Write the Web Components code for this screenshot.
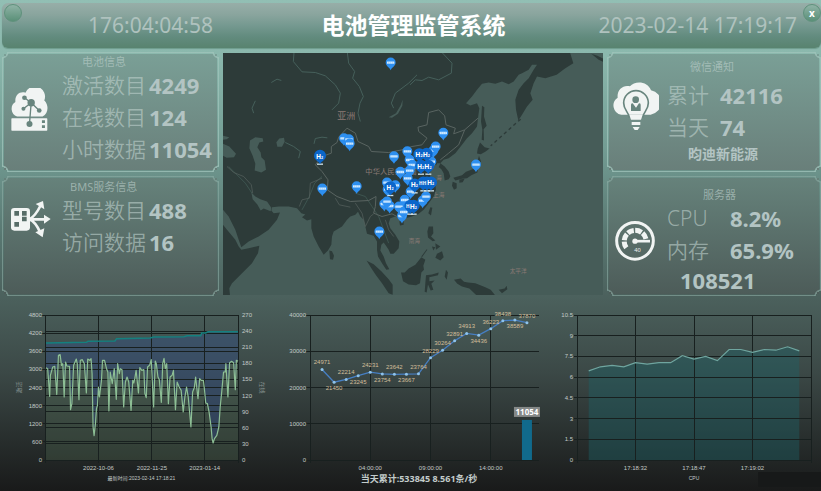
<!DOCTYPE html>
<html lang="zh-CN">
<head>
<meta charset="utf-8">
<title>电池管理监管系统</title>
<style>
html { height: 100%; }
body {
  margin: 0; min-height: 100%;
  font-family: "Noto Sans", "Noto Sans CJK SC", sans-serif;
  background: #1b1d1d;
}
</style>
</head>
<body>
<battery-dashboard></battery-dashboard>
<script>
const define = (name, html, setup) => {
  const tpl = document.createElement('template');
  tpl.innerHTML = html;
  customElements.define(name, class extends HTMLElement {
    constructor() {
      super();
      this.attachShadow({ mode: 'open' }).append(tpl.content.cloneNode(true));
    }
    connectedCallback() { if (setup) setup(this, this.shadowRoot); }
  });
};

/* ---------- header ---------- */
define('top-bar', `
<style>
:host { display: grid; grid-template-columns: 1fr auto 1fr; align-items: center; position: relative;
  min-height: 45px; border-radius: 6px; overflow: hidden; margin-left: 2px; padding-left: 4px; box-sizing: border-box;
  background: linear-gradient(#97aea8 0, #8aa59e 25%, #759990 50%, #628b7e 75%, #58836f 100%);
  box-shadow: 0 1px 1px #6d9c8c; }
h1 { margin: 0; font-size: 23px; line-height: 45px; font-weight: 700; color: #fff; }
time { font-size: 21px; line-height: 45px; color: #afc2be; font-weight: 400; }
.up { justify-self: start; padding-left: 82px; }
.now { justify-self: end; padding-right: 24px; }
button { position: absolute; top: 1px; width: 18px; height: 18px; border-radius: 50%; padding: 0;
  border: 1px solid #5f917c; background: linear-gradient(#8fb3a6, #5a9078); color: #fff;
  font: 700 10px/14px "Noto Sans", sans-serif; }
.menu { left: 2px; } .close { right: 0; }
</style>
<time class="up">176:04:04:58</time>
<h1>电池管理监管系统</h1>
<time class="now">2023-02-14 17:19:17</time>
<button class="menu" aria-label="菜单"></button>
<button class="close" aria-label="关闭">x</button>`);

/* ---------- panel ---------- */
define('info-panel', `
<style>
:host { --ln: rgba(160,196,187,.75); display: flex; box-sizing: border-box; min-width: 0;
  background:
   radial-gradient(circle at 0 0, transparent 5px, var(--ln) 5px 6px, transparent 7px) 0 0/7px 7px no-repeat,
   radial-gradient(circle at 100% 0, transparent 5px, var(--ln) 5px 6px, transparent 7px) 100% 0/7px 7px no-repeat,
   radial-gradient(circle at 0 100%, transparent 5px, var(--ln) 5px 6px, transparent 7px) 0 100%/7px 7px no-repeat,
   radial-gradient(circle at 100% 100%, transparent 5px, var(--ln) 5px 6px, transparent 7px) 100% 100%/7px 7px no-repeat,
   linear-gradient(var(--ln), var(--ln)) 50% 0/calc(100% - 12px) 1px no-repeat,
   linear-gradient(var(--ln), var(--ln)) 50% 100%/calc(100% - 12px) 1px no-repeat,
   linear-gradient(var(--ln), var(--ln)) 0 50%/1px calc(100% - 12px) no-repeat,
   linear-gradient(var(--ln), var(--ln)) 100% 50%/1px calc(100% - 12px) no-repeat,
   linear-gradient(var(--from), var(--to)) 50% 50%/calc(100% - 4px) calc(100% - 4px) no-repeat; }
:host([tone="low"]) { --ln: rgba(140,172,164,.6); }
.icon { flex: none; width: 60px; box-sizing: border-box; padding: var(--icon-top) 0 0 var(--icon-left, 9px); }
.body { flex: 1; min-width: 0; padding-top: var(--top); white-space: nowrap; }
h2 { margin: 0 0 var(--title-gap, 0) var(--title-left); font-size: 11px; line-height: 14px; font-weight: 400;
  color: rgba(190,208,204,.62); }
</style>
<div class="icon"><slot name="icon"></slot></div>
<div class="body"><h2></h2><slot></slot></div>`,
(el, root) => { root.querySelector('h2').textContent = el.getAttribute('heading'); });

define('stat-row', `
<style>
:host { display: flex; align-items: center; line-height: 32px; }
.label { flex: none; width: var(--label-width, 87px); font-size: 21px; font-weight: 350; color: rgba(190,208,204,.62); }
.value { font-size: 22px; font-weight: 700; color: #b3c4c3; }
</style>
<span class="label"><slot name="label"></slot></span><span class="value"><slot></slot></span>`);

/* ---------- map ---------- */
define('asia-map', `
<style>
:host { display: block; position: relative; min-width: 0; overflow: hidden; background: #465c58; margin: 1px 0; }
svg { position: absolute; inset: 0; width: 100%; height: 100%; display: block; }
text { font-family: "Noto Sans", "Noto Sans CJK SC", sans-serif; }
.place { fill: #8b7a75; }
.land { fill: #2d3b39; }
.sea { fill: #465c58; }
.river { fill: none; stroke: #46605b; stroke-width: 3; }
.border { fill: none; stroke: #596461; stroke-width: 3; stroke-linejoin: round; }
</style>
<svg viewBox="3 8 1140 729" preserveAspectRatio="xMidYMid slice" role="img" aria-label="亚洲地图">
<g class="land">
<path d="M3 8H1044L1054 40 1030 55 1004 75 970 85 945 80 935 100 925 130 932 150 915 170 900 195 889 212 882 180 880 150 890 120 905 100 920 85 935 60 945 45 930 45 920 60 900 70 890 75 875 95 860 103 840 95 820 102 800 98 780 102 765 120 750 140 732 160 745 167 765 160 772 175 768 205 765 230 750 250 735 265 720 285 700 310 680 325 665 330 655 340 668 350 680 365 685 380 680 388 668 392 665 370 658 358 648 350 640 345 620 335 610 345 600 345 610 355 625 352 630 360 622 370 628 390 640 405 642 420 635 440 620 460 605 480 590 492 570 500 550 505 545 512 535 508 520 500 505 505 500 520 505 535 520 555 532 575 530 595 515 612 505 612 500 600 492 588 485 578 478 585 475 602 485 620 492 640 502 658 493 660 480 640 468 620 465 600 465 575 455 558 445 555 435 552 430 530 425 510 415 500 408 486 400 495 385 500 375 510 360 530 335 545 330 560 328 585 318 602 305 615 290 590 275 560 268 535 268 508 255 512 240 502 250 494 238 490 225 475 200 470 170 470 150 472 148 482 155 490 174 488 165 510 140 540 110 560 80 575 58 592 50 570 40 540 20 500 3 480Z"/>
<path d="M3 525 15 540 40 570 50 590 58 600 80 595 112 588 108 610 90 640 60 670 30 700 22 715 24 737H3Z"/>
<path d="M322 602 330 604 336 618 333 630 324 628Z"/>
<path d="M774 278 788 292 803 296 790 306 776 313 765 311 767 297Z"/>
<path d="M771 318 777 335 770 350 766 368 748 376 735 385 720 387 700 392 694 384 720 376 732 366 752 358 763 344Z"/>
<path d="M692 396 704 400 704 415 696 420 690 408ZM712 389 728 387 722 397 712 399Z"/>
<path d="M780 168 787 172 786 200 794 228 785 238 786 272 779 270 781 240 777 215Z"/>
<path d="M625 472 631 474 627 497 619 490ZM532 514 545 512 545 525 534 527Z"/>
<path d="M620 530 633 530 634 550 627 560 640 572 632 574 618 563 616 545ZM640 580 655 590 642 600ZM630 590 640 592 634 602ZM645 612 660 604 665 622 655 632 640 624ZM616 600 600 622 598 620 614 598Z"/>
<path d="M537 668 548 668 560 656 580 645 598 622 610 630 604 648 606 660 598 668 594 700 582 706 560 704 543 694Z"/>
<path d="M434 633 455 643 478 664 500 688 512 705 512 735 500 730 480 700 462 676 450 658Z"/>
<path d="M612 676 630 674 650 668 648 676 622 682 622 694 638 692 628 702 634 720 626 722 618 704 614 728 608 726 610 700ZM672 660 678 668 674 690 668 680ZM696 690 716 686 726 696 738 698 760 700 790 712 806 720 820 737H764L742 716 720 710 706 702ZM830 720 848 716 854 708 856 718 840 730Z"/>
<path d="M1108 12 1126 18 1143 26V36L1130 30Z"/>
</g>
<g class="sea">
<path d="M84 272 100 262 122 265 124 275 112 278 106 292 116 308 118 322 128 332 132 360 118 368 98 362 100 342 92 318 82 295Z"/>
<path d="M3 282 22 290 42 312 36 322 14 324 3 318ZM3 258 22 262 14 268 3 270Z"/>
<path d="M163 277 172 266 186 264 188 276 180 291 166 291Z"/>
<path d="M500 202 522 190 536 166 542 150 541 168 528 192 510 204Z"/>
<path d="M88 428 100 440 115 448 135 455 148 474 146 484 125 476 116 482 106 464 92 448Z"/>
<path d="M645 340 655 340 650 352 640 352Z"/>
</g>
<g class="river">
<path d="M216 8 214 35 240 66 280 68 310 78 340 105 355 130 350 160 330 180M376 8 380 40 398 65 392 85 412 110 424 140 414 160 408 190 415 215M585 75 560 100 520 130 508 160 515 175M95 190 90 175 100 153M148 98 165 88 178 92M190 278 215 290 235 305 230 325M276 282 280 266 300 262 316 264M660 8 690 40 688 70 650 90 620 82 600 92 580 90 564 105"/>
<path d="M20 350 45 375 70 400 90 430M240 480 262 440 278 400 300 380M400 430 430 440 450 470 470 500 485 540 500 580" stroke-width="2"/>
</g>
<g class="border">
<path d="M280 345 300 320 328 310 328 290 345 278 350 262 375 235 400 250 408 275 440 290 448 305 500 308 540 300 570 290 600 285 615 265 590 245 588 232 615 225 620 188 650 180 668 198 672 225 700 235 695 252 728 240 768 205M728 240 710 285 680 310 655 330M280 345 300 365 318 390 316 420 345 440 385 455 440 452 462 440 460 470 455 490 480 500 510 492 525 500"/>
<path d="M15 350 35 368 65 380 88 405 92 430M232 470 240 450 262 445 265 400 300 385M340 445 352 465 385 472M400 460 420 490 430 530 445 500 455 492M490 510 500 540 515 560" stroke-width="2"/>
</g>
<path d="M896 208 880 222 860 240 842 256 824 272 806 288" fill="none" stroke="#2d3b39" stroke-width="4" stroke-dasharray="10 9"/>
<g class="place">
<text x="346" y="207" font-size="27">亚洲</text>
<text x="430" y="374" font-size="22">中华人民共和国</text>
<text x="642" y="391" font-size="17">海</text>
<text x="633" y="441" font-size="17">上海</text>
<text x="560" y="580" font-size="17">南海</text>
<text x="863" y="669" font-size="17">太平洋</text>
</g>
<g id="pins"></g>
</svg>`,
(el, root) => {
  const small = [[506,38],[366,265],[381,268],[383,281],[301,416],[404,409],[472,545],[516,319],[556,304],[563,330],[571,345],[535,366],[563,362],[557,385],[566,425],[495,398],[520,406],[497,418],[487,462],[503,468],[495,455],[531,470],[540,498],[545,486],[664,249],[762,344],[628,335],[634,302],[641,290],[602,452],[612,440],[548,450]];
  const big = [[294,318],[505,412],[592,313],[614,312],[619,348],[597,348],[578,404],[604,398,1],[615,398,1],[627,398],[565,468,1],[575,468]];
  const mark = covered => covered
    ? '<text x="-13" y="7" font-size="14" font-weight="700" fill="#fff">H</text>'
    : '<text x="-12" y="8" font-size="20" font-weight="700" fill="#fff">H<tspan font-size="11">2</tspan></text>';
  root.getElementById('pins').innerHTML =
    small.map(([x, y]) => `<g transform="translate(${x} ${y})"><path d="M0 23C-3 15-15 11-15 0A15 15 0 0 1 15 0C15 11 3 15 0 23Z" fill="#2d8ff0"/><rect x="-11" y="-3" width="22" height="7" rx="1" fill="#d4ecff"/><path d="M-6-3v7M0-3v7M6-3v7" stroke="#5cabf5" stroke-width="1"/></g>`).join('') +
    big.map(([x, y]) => `<g transform="translate(${x} ${y})"><path d="M-9 25H9" stroke="#cfe2ec" stroke-width="4"/><path d="M0 25C-3 17-18 13-18 0A18 18 0 0 1 18 0C18 13 3 17 0 25Z" fill="#0b66ca"/></g>`).join('') +
    big.map(([x, y, covered]) => `<g transform="translate(${x} ${y})">${mark(covered)}</g>`).join('');
});

/* ---------- charts ---------- */
const chartStyle = `<style>
:host { display: block; position: relative; min-width: 0; overflow: hidden; }
svg { position: absolute; inset: 0; width: 100%; height: 100%; display: block; }
text { font: 6px "Liberation Sans", "Noto Sans CJK SC", sans-serif; fill: #c3cac8; }
.grid { stroke: #18201f; stroke-width: 1; shape-rendering: crispEdges; }
.note { font-size: 5px; }
.soft { fill: #84908d; }
.point { fill: #d3bf9b; }
.total { font: 700 9px "Noto Sans", "Noto Sans CJK SC", sans-serif; fill: #c3cccb; }
.tag { font: 700 8px "Noto Sans", sans-serif; fill: #fff; }
</style><svg></svg>`;

const frame = (el, m) => {
  const w = el.clientWidth, h = el.clientHeight;
  const x0 = m.left, x1 = w - m.right, y0 = m.top, y1 = h - m.bottom;
  return { w, h, x0, x1, y0, y1, X: f => x0 + (x1 - x0) * f, Y: f => y1 - (y1 - y0) * f };
};
const hline = (f, t, a = 4) => `<path class="grid" d="M${f.x0 - a} ${f.Y(t)}H${f.x1}"/>`;
const vline = (f, t) => `<path class="grid" d="M${f.X(t)} ${f.y0}V${f.y1 + 3}"/>`;
const label = (x, y, s, anchor = 'middle', cls = '') => `<text x="${x}" y="${y}" text-anchor="${anchor}" class="${cls}">${s}</text>`;
const chart = (name, draw) => define(name, chartStyle, (el, root) => {
  const svg = root.querySelector('svg');
  const render = () => { svg.innerHTML = draw(el); };
  render();
  new ResizeObserver(render).observe(el);
});

const online = [140,202,145,205,151,288,153,225,160,200,166,198,172,282,177,165,182,163,186,195,190,190,194,290,198,185,202,197,210,198,213,328,217,310,222,195,230,176,233,190,238,298,242,180,248,178,254,190,260,278,264,176,270,180,274,175,277,220,280,380,283,406,287,370,290,325,293,315,296,260,299,290,305,240,308,180,314,180,320,205,324,215,327,332,331,215,337,250,343,205,349,297,353,190,358,220,361,205,366,208,371,320,376,245,381,230,386,245,393,330,398,240,401,248,404,235,408,210,415,278,419,202,425,210,431,208,434,280,438,292,442,200,448,195,453,178,460,320,465,182,468,190,473,230,477,238,483,306,487,190,491,174,495,205,499,190,504,310,509,230,515,225,519,210,525,328,530,245,536,260,542,270,548,335,553,290,558,260,563,290,571,380,576,275,581,262,585,230,592,295,597,235,602,240,608,240,611,265,615,308,620,310,625,335,631,380,634,415,637,428,641,415,648,405,654,380,658,320,663,270,668,215,673,215,675,190,681,290,686,187,692,183,698,187,703,268,706,180,711,183];
const active = [140,128,260,126,265,123,345,122,350,115,450,113,460,110,550,109,560,106,600,106,603,98,615,98,622,94,711,94];

chart('active-chart', el => {
  const f = frame(el, { left: 45, right: 36, top: 19, bottom: 31 });
  const pts = a => { const r = []; for (let i = 0; i < a.length; i += 2) r.push([f.X((a[i] - 137) / 574), f.Y((479 - a[i + 1]) / 435)]); return r; };
  const g = pts(online), t = pts(active);
  let s = `<path d="M${t.join('L')}L${[...g].reverse().join('L')}Z" fill="#36507a" fill-opacity=".55"/>
    <path d="M${g[0][0]} ${f.y1}L${g.join('L')}V${f.y1}Z" fill="#7fae7c" fill-opacity=".17"/>`;
  for (let i = 0; i <= 8; i++) s += hline(f, i / 8) + label(f.x0 - 3, f.Y(i / 8) + 2, i * 600, 'end');
  for (let i = 0; i <= 9; i++) s += hline(f, i / 9, 0) + label(f.x1 + 4, f.Y(i / 9) + 2, i * 30, 'start');
  s += vline(f, 0) + vline(f, 1);
  [['2022-10-06', 159], ['2022-11-25', 318], ['2023-01-14', 475]].forEach(([d, x]) => { s += vline(f, x / 574) + label(f.X(x / 574), f.y1 + 10, d); });
  s += `<path d="M${t.join('L')}" fill="none" stroke="#14807f" stroke-width="1.5"/>
    <path d="M${g.join('L')}" fill="none" stroke="#8dbf95" stroke-width="1.2" stroke-linejoin="round"/>`;
  const my = (f.y0 + f.y1) / 2;
  s += `<text class="soft" text-anchor="middle" transform="translate(21 ${my}) rotate(-90)">激活</text>
    <text class="soft" text-anchor="middle" transform="translate(${f.w - 14} ${my}) rotate(90)">在线</text>`;
  return s + label(f.X(.5), f.y1 + 20, '最新时间:2023-02-14 17:18:21', 'middle', 'note');
});

chart('hourly-chart', el => {
  const f = frame(el, { left: 36, right: 9, top: 19, bottom: 31 });
  const v = [24971,21450,22214,23245,24231,23754,23642,23667,23764,28229,30264,32891,34913,34436,36223,38438,38589,37870];
  const below = [1, 3, 5, 7, 13, 16];
  const p = v.map((n, i) => [f.X((i + 1) / 19), f.Y(n / 40000)]);
  let s = '';
  for (let i = 0; i <= 4; i++) s += hline(f, i / 4) + label(f.x0 - 4, f.Y(i / 4) + 2, i * 10000, 'end');
  s += vline(f, 0);
  [['04:00:00', 5], ['09:00:00', 10], ['14:00:00', 15]].forEach(([d, i]) => { s += vline(f, i / 19) + label(f.X(i / 19), f.y1 + 10, d); });
  const bx = f.X(18 / 19), by = f.Y(11054 / 40000);
  s += `<rect x="${bx - 5}" y="${by}" width="10" height="${f.y1 - by}" fill="#116a8c"/>
    <rect x="${bx - 13}" y="${by - 13}" width="26" height="10" fill="#858988"/>` + label(bx, by - 5, '11054', 'middle', 'tag');
  s += `<path d="M${p.join('L')}" fill="none" stroke="#467fc4" stroke-width="1.3"/>`;
  p.forEach(([x, y], i) => {
    s += `<circle cx="${x}" cy="${y}" r="1.5" fill="#8fc3ea"/>` + label(x, below.includes(i) ? y + 8 : y - 5, v[i], 'middle', 'point');
  });
  return s + label(f.w / 2 + 8, f.y1 + 22, '当天累计:533845 8.561条/秒', 'middle', 'total');
});

chart('cpu-chart', el => {
  const f = frame(el, { left: 30, right: 10, top: 19, bottom: 31 });
  const v = [6.45,6.75,6.85,6.75,7.05,6.95,7.05,7.05,7.55,7.3,7.5,7.2,8,8,7.8,8,7.95,8.2,7.9];
  const p = v.map((n, i) => [f.X((i + 1) / 20), f.Y(n / 10.5)]);
  let s = `<path d="M${p[0][0]} ${f.y1}L${p.join('L')}V${f.y1}Z" fill="#1c6266" fill-opacity=".42"/>`;
  for (let i = 0; i <= 7; i++) s += hline(f, i / 7, 3) + label(f.x0 - 4, f.Y(i / 7) + 2, i * 1.5, 'end');
  s += vline(f, 0) + vline(f, 1);
  [['17:18:32', 5], ['17:18:47', 10], ['17:19:02', 15]].forEach(([d, i]) => { s += vline(f, i / 20) + label(f.X(i / 20), f.y1 + 10, d); });
  s += `<path d="M${p.join('L')}" fill="none" stroke="#6fa59f" stroke-width="1.2"/>
    <rect x="${f.w - 63}" y="${f.h - 19}" width="63" height="15" fill="#171919"/>`;
  return s + label(f.X(.5), f.y1 + 20, 'CPU', 'middle', 'note');
});

/* ---------- page ---------- */
define('battery-dashboard', `
<style>
:host { display: grid; min-height: 100vh; box-sizing: border-box; padding-top: 3px;
  grid-template-rows: auto minmax(244px, 248fr) minmax(180px, 195fr);
  background: linear-gradient(#92bfb4 0, #8bb8ad 11%, #739d94 30%, #587771 48%, #4b605c 61%, #3b4846 76%, #272d2c 90%, #191a1a 100%); }
.middle { display: grid; grid-template-columns: 217fr 380fr 214fr; gap: 4px; padding: 4px 0 0 2px; }
.side { display: grid; grid-template-rows: 1fr 1fr; gap: 4px; min-width: 0; }
.charts { display: grid; grid-template-columns: repeat(3, 1fr); }
.side > :first-child { --from: #7a9f96; --to: #697f7a; }
.side > :last-child { --from: #66827b; --to: #4d5c59; }
.battery { --icon-top: 36px; --top: 3px; --title-left: 20px; }
.bms { --icon-top: 24px; --top: 4px; --title-left: 8px; }
.wechat { --icon-top: 30px; --icon-left: 6px; --top: 8px; --title-left: 23px; --title-gap: 5px; --label-width: 53px; }
.server { --icon-top: 44px; --icon-left: 8px; --top: 12px; --title-left: 36px; --label-width: 63px; }
p { margin: 0; color: #b3c4c3; font-weight: 700; }
.company { font-size: 14px; line-height: 22px; padding-left: 21px; }
.count { font-size: 22px; line-height: 28px; padding-left: 13px; }
svg { display: block; fill: #f1f4f3; }
.cut { fill: #68857e; } .line { fill: none; stroke: #68857e; }
</style>
<top-bar></top-bar>
<main class="middle">
  <div class="side">
    <info-panel class="battery" heading="电池信息">
      <svg slot="icon" width="37" height="43" viewBox="32 116 110 128">
        <path d="M50 201A24 24 0 0 1 45 158C43 136 58 125 75 130A30 30 0 0 1 131 153C145 165 144 192 126 201Z"/>
        <rect x="33" y="206" width="107" height="37" rx="2"/>
        <path class="line" stroke-width="4" d="M92 160 72 145M92 160 69 178M92 160 116 183M92 160 87 222"/>
        <g class="cut"><circle cx="92" cy="160" r="11"/><circle cx="72" cy="145" r="7"/><circle cx="69" cy="178" r="6"/><circle cx="116" cy="183" r="7"/><circle cx="87" cy="223" r="9"/><path d="M124 212h9v8h-9zM124 227h9v8h-9z"/></g>
      </svg>
      <stat-row><span slot="label">激活数目</span>4249</stat-row>
      <stat-row><span slot="label">在线数目</span>124</stat-row>
      <stat-row><span slot="label">小时数据</span>11054</stat-row>
    </info-panel>
    <info-panel class="bms" tone="low" heading="BMS服务信息">
      <svg slot="icon" width="40" height="38" viewBox="33 86 120 114">
        <rect x="33" y="110" width="57" height="68" rx="10"/>
        <path d="M107 98 129 89 133 114ZM132 130 152 143 132 157ZM106 183 133 171 128 198Z"/>
        <path d="M84 144H134M88 144C104 136 112 122 121 104M88 144C104 150 112 164 121 184" fill="none" stroke="#f1f4f3" stroke-width="8"/>
        <path fill="#566c67" d="M43 119h14v14H43zM66 119h14v14H66zM66 136h14v14H66zM43 152h14v14H43z"/>
      </svg>
      <stat-row><span slot="label">型号数目</span>488</stat-row>
      <stat-row><span slot="label">访问数据</span>16</stat-row>
    </info-panel>
  </div>
  <asia-map></asia-map>
  <div class="side">
    <info-panel class="wechat" heading="微信通知">
      <svg slot="icon" width="46" height="49" viewBox="37 99 138 147">
        <path d="M62 197A28 28 0 0 1 51 146C48 122 68 106 88 112 102 94 142 96 151 124A37 37 0 0 1 150 197Z"/>
        <path class="line" stroke-width="5" d="M86 206C84 188 69 184 69 162A37 37 0 0 1 143 162C143 184 128 188 126 206"/>
        <path d="M86 197H126L121 212H91ZM93 219H119V228H93ZM96 234H117L111 243H102Z"/>
        <g class="cut"><circle cx="105" cy="152" r="10"/><path d="M91 186V167Q91 163 96 163L106 176 115 163Q120 163 120 167V186Z"/></g>
      </svg>
      <stat-row><span slot="label">累计</span>42116</stat-row>
      <stat-row><span slot="label">当天</span>74</stat-row>
      <p class="company">昀迪新能源</p>
    </info-panel>
    <info-panel class="server" tone="low" heading="服务器">
      <svg slot="icon" width="40" height="42" viewBox="43 146 120 125">
        <circle cx="103" cy="208" r="55" fill="none" stroke="#f1f4f3" stroke-width="9"/>
        <path d="M77 229A33 33 0 1 1 136 203" fill="none" stroke="#f1f4f3" stroke-width="15" stroke-dasharray="20 4"/>
        <circle cx="103" cy="209" r="8"/><path d="M101 205H148V213H101Z"/>
        <text x="101" y="240" font-size="17" font-family="Noto Sans, sans-serif">40</text>
      </svg>
      <stat-row><span slot="label">CPU</span>8.2%</stat-row>
      <stat-row><span slot="label">内存</span>65.9%</stat-row>
      <p class="count">108521</p>
    </info-panel>
  </div>
</main>
<section class="charts"><active-chart></active-chart><hourly-chart></hourly-chart><cpu-chart></cpu-chart></section>`);
</script>
</body>
</html>
